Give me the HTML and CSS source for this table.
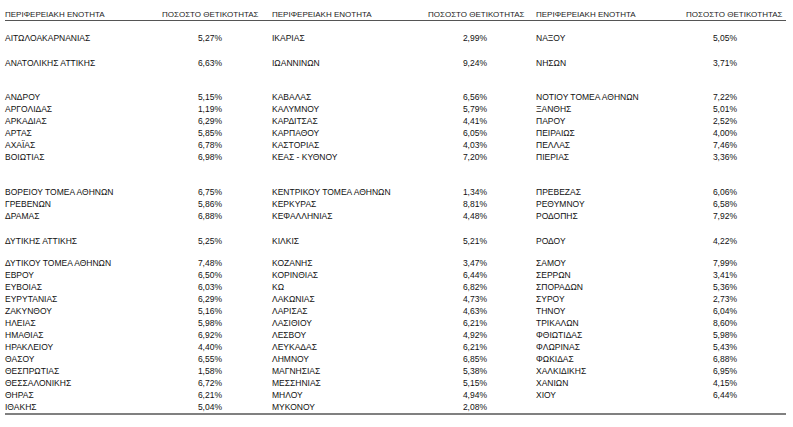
FILE: index.html
```html
<!DOCTYPE html>
<html lang="el">
<head>
<meta charset="utf-8">
<link rel="stylesheet" href="styles.css">
</head>
<body>
<div class="sheet">
  <div class="row head">
    <span class="name">ΠΕΡΙΦΕΡΕΙΑΚΗ ΕΝΟΤΗΤΑ</span><span class="pct">ΠΟΣΟΣΤΟ ΘΕΤΙΚΟΤΗΤΑΣ</span><span></span>
    <span class="name">ΠΕΡΙΦΕΡΕΙΑΚΗ ΕΝΟΤΗΤΑ</span><span class="pct">ΠΟΣΟΣΤΟ ΘΕΤΙΚΟΤΗΤΑΣ</span><span></span>
    <span class="name">ΠΕΡΙΦΕΡΕΙΑΚΗ ΕΝΟΤΗΤΑ</span><span class="pct">ΠΟΣΟΣΤΟ ΘΕΤΙΚΟΤΗΤΑΣ</span>
  </div>
  <div class="body">
    <div class="sp sp1"></div>
    <div class="row"><span>ΑΙΤΩΛΟΑΚΑΡΝΑΝΙΑΣ</span><span class="num n1">5,27%</span><span></span><span>ΙΚΑΡΙΑΣ</span><span class="num n2">2,99%</span><span></span><span>ΝΑΞΟΥ</span><span class="num n3">5,05%</span></div>
    <div class="sp sp2"></div>
    <div class="row"><span>ΑΝΑΤΟΛΙΚΗΣ ΑΤΤΙΚΗΣ</span><span class="num n1">6,63%</span><span></span><span>ΙΩΑΝΝΙΝΩΝ</span><span class="num n2">9,24%</span><span></span><span>ΝΗΣΩΝ</span><span class="num n3">3,71%</span></div>
    <div class="sp sp3"></div>
    <div class="row"><span>ΑΝΔΡΟΥ</span><span class="num n1">5,15%</span><span></span><span>ΚΑΒΑΛΑΣ</span><span class="num n2">6,56%</span><span></span><span>ΝΟΤΙΟΥ ΤΟΜΕΑ ΑΘΗΝΩΝ</span><span class="num n3">7,22%</span></div>
    <div class="row"><span>ΑΡΓΟΛΙΔΑΣ</span><span class="num n1">1,19%</span><span></span><span>ΚΑΛΥΜΝΟΥ</span><span class="num n2">5,79%</span><span></span><span>ΞΑΝΘΗΣ</span><span class="num n3">5,01%</span></div>
    <div class="row"><span>ΑΡΚΑΔΙΑΣ</span><span class="num n1">6,29%</span><span></span><span>ΚΑΡΔΙΤΣΑΣ</span><span class="num n2">4,41%</span><span></span><span>ΠΑΡΟΥ</span><span class="num n3">2,52%</span></div>
    <div class="row"><span>ΑΡΤΑΣ</span><span class="num n1">5,85%</span><span></span><span>ΚΑΡΠΑΘΟΥ</span><span class="num n2">6,05%</span><span></span><span>ΠΕΙΡΑΙΩΣ</span><span class="num n3">4,00%</span></div>
    <div class="row"><span>ΑΧΑΪΑΣ</span><span class="num n1">6,78%</span><span></span><span>ΚΑΣΤΟΡΙΑΣ</span><span class="num n2">4,03%</span><span></span><span>ΠΕΛΛΑΣ</span><span class="num n3">7,46%</span></div>
    <div class="row"><span>ΒΟΙΩΤΙΑΣ</span><span class="num n1">6,98%</span><span></span><span>ΚΕΑΣ - ΚΥΘΝΟΥ</span><span class="num n2">7,20%</span><span></span><span>ΠΙΕΡΙΑΣ</span><span class="num n3">3,36%</span></div>
    <div class="sp sp4"></div>
    <div class="row"><span>ΒΟΡΕΙΟΥ ΤΟΜΕΑ ΑΘΗΝΩΝ</span><span class="num n1">6,75%</span><span></span><span>ΚΕΝΤΡΙΚΟΥ ΤΟΜΕΑ ΑΘΗΝΩΝ</span><span class="num n2">1,34%</span><span></span><span>ΠΡΕΒΕΖΑΣ</span><span class="num n3">6,06%</span></div>
    <div class="row"><span>ΓΡΕΒΕΝΩΝ</span><span class="num n1">5,86%</span><span></span><span>ΚΕΡΚΥΡΑΣ</span><span class="num n2">8,81%</span><span></span><span>ΡΕΘΥΜΝΟΥ</span><span class="num n3">6,58%</span></div>
    <div class="row"><span>ΔΡΑΜΑΣ</span><span class="num n1">6,88%</span><span></span><span>ΚΕΦΑΛΛΗΝΙΑΣ</span><span class="num n2">4,48%</span><span></span><span>ΡΟΔΟΠΗΣ</span><span class="num n3">7,92%</span></div>
    <div class="sp sp5"></div>
    <div class="row"><span>ΔΥΤΙΚΗΣ ΑΤΤΙΚΗΣ</span><span class="num n1">5,25%</span><span></span><span>ΚΙΛΚΙΣ</span><span class="num n2">5,21%</span><span></span><span>ΡΟΔΟΥ</span><span class="num n3">4,22%</span></div>
    <div class="sp sp6"></div>
    <div class="row"><span>ΔΥΤΙΚΟΥ ΤΟΜΕΑ ΑΘΗΝΩΝ</span><span class="num n1">7,48%</span><span></span><span>ΚΟΖΑΝΗΣ</span><span class="num n2">3,47%</span><span></span><span>ΣΑΜΟΥ</span><span class="num n3">7,99%</span></div>
    <div class="row"><span>ΕΒΡΟΥ</span><span class="num n1">6,50%</span><span></span><span>ΚΟΡΙΝΘΙΑΣ</span><span class="num n2">6,44%</span><span></span><span>ΣΕΡΡΩΝ</span><span class="num n3">3,41%</span></div>
    <div class="row"><span>ΕΥΒΟΙΑΣ</span><span class="num n1">6,03%</span><span></span><span>ΚΩ</span><span class="num n2">6,82%</span><span></span><span>ΣΠΟΡΑΔΩΝ</span><span class="num n3">5,36%</span></div>
    <div class="row"><span>ΕΥΡΥΤΑΝΙΑΣ</span><span class="num n1">6,29%</span><span></span><span>ΛΑΚΩΝΙΑΣ</span><span class="num n2">4,73%</span><span></span><span>ΣΥΡΟΥ</span><span class="num n3">2,73%</span></div>
    <div class="row"><span>ΖΑΚΥΝΘΟΥ</span><span class="num n1">5,16%</span><span></span><span>ΛΑΡΙΣΑΣ</span><span class="num n2">4,63%</span><span></span><span>ΤΗΝΟΥ</span><span class="num n3">6,04%</span></div>
    <div class="row"><span>ΗΛΕΙΑΣ</span><span class="num n1">5,98%</span><span></span><span>ΛΑΣΙΘΙΟΥ</span><span class="num n2">6,21%</span><span></span><span>ΤΡΙΚΑΛΩΝ</span><span class="num n3">8,60%</span></div>
    <div class="row"><span>ΗΜΑΘΙΑΣ</span><span class="num n1">6,92%</span><span></span><span>ΛΕΣΒΟΥ</span><span class="num n2">4,92%</span><span></span><span>ΦΘΙΩΤΙΔΑΣ</span><span class="num n3">5,98%</span></div>
    <div class="row"><span>ΗΡΑΚΛΕΙΟΥ</span><span class="num n1">4,40%</span><span></span><span>ΛΕΥΚΑΔΑΣ</span><span class="num n2">6,21%</span><span></span><span>ΦΛΩΡΙΝΑΣ</span><span class="num n3">5,43%</span></div>
    <div class="row"><span>ΘΑΣΟΥ</span><span class="num n1">6,55%</span><span></span><span>ΛΗΜΝΟΥ</span><span class="num n2">6,85%</span><span></span><span>ΦΩΚΙΔΑΣ</span><span class="num n3">6,88%</span></div>
    <div class="row"><span>ΘΕΣΠΡΩΤΙΑΣ</span><span class="num n1">1,58%</span><span></span><span>ΜΑΓΝΗΣΙΑΣ</span><span class="num n2">5,38%</span><span></span><span>ΧΑΛΚΙΔΙΚΗΣ</span><span class="num n3">6,95%</span></div>
    <div class="row"><span>ΘΕΣΣΑΛΟΝΙΚΗΣ</span><span class="num n1">6,72%</span><span></span><span>ΜΕΣΣΗΝΙΑΣ</span><span class="num n2">5,15%</span><span></span><span>ΧΑΝΙΩΝ</span><span class="num n3">4,15%</span></div>
    <div class="row"><span>ΘΗΡΑΣ</span><span class="num n1">6,21%</span><span></span><span>ΜΗΛΟΥ</span><span class="num n2">4,94%</span><span></span><span>ΧΙΟΥ</span><span class="num n3">6,44%</span></div>
    <div class="row"><span>ΙΘΑΚΗΣ</span><span class="num n1">5,04%</span><span></span><span>ΜΥΚΟΝΟΥ</span><span class="num n2">2,08%</span><span></span><span></span><span class="num n3"></span></div>
  </div>
</div>
</body>
</html>
```
FILE: styles.css
```css
html, body {
  margin: 0;
  padding: 0;
  background: #ffffff;
}

.sheet {
  width: 781px;
  margin-left: 5px;
  padding-top: 10px;
  font-family: "Liberation Sans", Arial, sans-serif;
  font-size: 8.5px;
  color: #111111;
}

.row {
  display: grid;
  grid-template-columns: 157px 95px 15px 156px 92px 16px 150px 86px;
  height: 12px;
  line-height: 12px;
  white-space: nowrap;
}

.head {
  height: 10px;
  line-height: 10px;
  font-size: 8px;
  color: #222222;
  border-bottom: 1px solid #555555;
}

.num {
  text-align: right;
}

.n1 { padding-right: 35px; }
.n2 { padding-right: 33px; }
.n3 { padding-right: 35px; }

.body {
  padding-top: 1px;
  border-bottom: 2px solid #808080;
}

.sp1 { height: 10px; }
.sp2 { height: 13px; }
.sp3 { height: 22px; }
.sp4 { height: 23px; }
.sp5 { height: 13px; }
.sp6 { height: 10px; }
```
